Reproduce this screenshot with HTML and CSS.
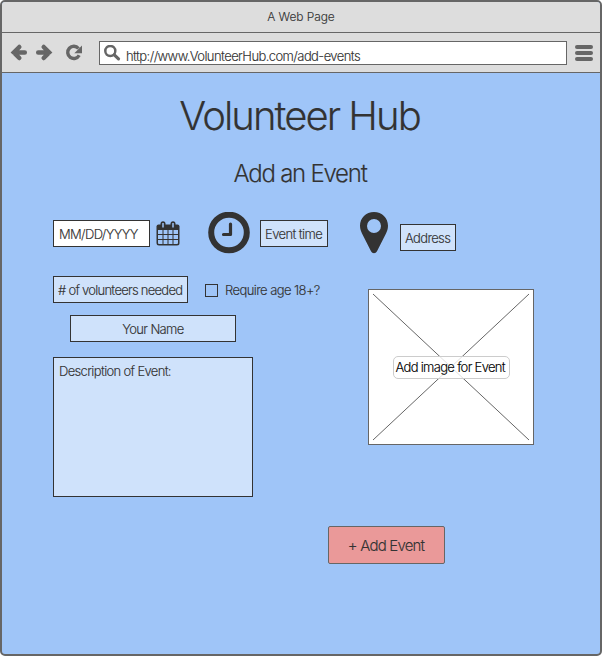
FILE: index.html
```html
<!DOCTYPE html>
<html lang="en">
<head>
<meta charset="utf-8">
<title>A Web Page</title>
<link rel="stylesheet" href="styles.css">
</head>
<body>
<div class="window">
  <header class="titlebar">A Web Page</header>
  <nav class="toolbar">
    <svg class="nav-icons" width="82" height="38" viewBox="0 0 82 38" fill="none" stroke="#666" stroke-width="4.500">
      <path d="M15.800 19.500H5M10.300 14L4.800 19.500L10.300 25" stroke-linecap="round"/>
      <path d="M29.200 19.500H40M34.700 14L40.200 19.500L34.700 25" stroke-linecap="round"/>
      <path d="M69.500 15.500A6.100 6.100 0 1 0 70.200 22.300" stroke-width="3.400"/>
      <path d="M73 12.500V20.200H65.300Z" fill="#666" stroke="none"/>
    </svg>
    <div class="address-bar">
      <svg class="search" width="17" height="17" viewBox="0 0 17 17" fill="none" stroke="#666"><circle cx="6.300" cy="6" r="5" stroke-width="2.500"/><path d="M10.300 9.800L14.500 13.800" stroke-width="3.200" stroke-linecap="round"/></svg>
      <span class="url">http://www.VolunteerHub.com/add-events</span>
    </div>
    <div class="menu"><i></i><i></i><i></i></div>
  </nav>
  <main class="page">
    <h1>Volunteer Hub</h1>
    <h2>Add an Event</h2>
    <div class="details">
      <div class="field date">MM/DD/YYYY</div>
      <svg class="calendar" width="24" height="25" viewBox="0 0 24 25"><path d="M2.500 3.500H21.500Q23.500 3.500 23.500 5.500V22Q23.500 24.500 21 24.500H3Q0.500 24.500 0.500 22V5.500Q0.500 3.500 2.500 3.500Z" fill="#333"/><path d="M2 9H6.500V13H2ZM7.500 9H11.500V13H7.500ZM12.500 9H16.500V13H12.500ZM17.500 9H22V13H17.500ZM2 14H6.500V18H2ZM7.500 14H11.500V18H7.500ZM12.500 14H16.500V18H12.500ZM17.500 14H22V18H17.500ZM2 19H6.500V23H3Q2 23 2 22ZM7.500 19H11.500V23H7.500ZM12.500 19H16.500V23H12.500ZM17.500 19H22V22Q22 23 21 23H17.500Z" fill="#9fc5f8"/><rect x="4.500" y="0.300" width="5" height="7.500" rx="2.500" fill="#333"/><rect x="14.500" y="0.300" width="5" height="7.500" rx="2.500" fill="#333"/><path d="M7 2V6.500M17 2V6.500" stroke="#9fc5f8" stroke-width="1.500"/></svg>
      <svg class="clock" width="42" height="42" viewBox="0 0 42 42" fill="none" stroke="#333"><circle cx="21" cy="20.500" r="17.800" stroke-width="6"/><path d="M22.500 12V22.500H15.500" stroke-width="3.200" stroke-linecap="round" stroke-linejoin="round"/></svg>
      <div class="field time">Event time</div>
      <svg class="pin" width="28" height="42" viewBox="0 0 28 42"><path fill="#333" fill-rule="evenodd" d="M14 0C6 0 0 6 0 13.800C0 17 1 19.500 2 21.500L11 39.200C12.300 41.800 15.700 41.800 17 39.200L26 21.500C27 19.500 28 17 28 13.800C28 6 22 0 14 0ZM14 7A7 7 0 1 1 14 21A7 7 0 1 1 14 7Z"/></svg>
      <div class="field address">Address</div>
    </div>
    <div class="body">
      <div class="form">
        <div class="requirements">
          <div class="field volunteers"># of volunteers needed</div>
          <span class="checkbox"></span>
          <span class="age">Require age 18+?</span>
        </div>
        <div class="field name">Your Name</div>
        <div class="field description">Description of Event:</div>
      </div>
      <div class="image">
        <svg class="cross" width="164" height="154" viewBox="0 0 164 154" stroke="#666" stroke-width="1"><path d="M4 4L160 150M160 4L4 150"/></svg>
        <span class="caption">Add image for Event</span>
      </div>
    </div>
    <div class="button">+ Add Event</div>
  </main>
</div>
</body>
</html>
```
FILE: styles.css
```css
* { box-sizing: border-box; }
body { margin: 0; background: #fff; }
.window { height: 656px; overflow: hidden; border: 2px solid #666; border-radius: 5px; background: #9fc5f8; color: #333; font: 300 13px/16px Inter, sans-serif; letter-spacing: -.65px; white-space: nowrap; -webkit-text-stroke: .12px; }
.titlebar { height: 31px; padding-top: 7px; border-bottom: 1px solid #666; background: #ddd; text-align: center; font-size: 12px; letter-spacing: -.1px; }
.toolbar { display: flex; height: 40px; border-bottom: 1px solid #666; background: #ddd; padding-left: 7px; }
.address-bar { display: flex; width: 468px; height: 24px; margin: 8px 0 0 8px; border: 1px solid #666; background: #fff; }
.search { margin: 3px 0 0 4px; }
.url { margin: 6px 0 0 5px; letter-spacing: -.58px; }
.menu { display: grid; align-content: start; gap: 2px; margin: 12px 0 0 8px; }
.menu i { width: 18px; height: 4px; border-radius: 2px; background: #666; }
.page { text-align: center; }
h1 { margin: 0; padding-top: 19px; font: 300 40px/48px Inter, sans-serif; letter-spacing: -1.95px; padding-right: 3px; }
h2 { margin: 19px 0 0; font: 300 24px/30px Inter, sans-serif; letter-spacing: -1.25px; padding-right: 2px; }
.details { display: flex; height: 42px; margin: 23px 0 0 51px; }
.field { height: 27px; padding: 5px 4px; border: 1px solid #333; background: #cfe2fb; text-align: left; }
.date { width: 97px; margin-top: 8px; background: #fff; padding-left: 5px; }
.calendar { margin: 9px 0 0 6px; }
.clock { margin-left: 28px; }
.time { width: 68px; margin: 8px 0 0 10px; letter-spacing: -.6px; }
.pin { margin-left: 32px; }
.address { width: 56px; margin: 12px 0 0 12px; }
.body { display: flex; margin: 22px 0 0 51px; }
.form { width: 315px; }
.requirements { display: flex; }
.volunteers { width: 135px; letter-spacing: -.74px; }
.checkbox { width: 13px; height: 13px; margin: 8px 0 0 17px; border: 1px solid #333; }
.age { margin: 6px 0 0 7px; letter-spacing: -.58px; }
.name { width: 166px; margin: 12px 0 0 17px; text-align: center; }
.description { width: 200px; height: 140px; margin-top: 15px; padding-left: 5px; letter-spacing: -.66px; }
.image { display: grid; place-items: center; width: 166px; height: 156px; margin-top: 13px; border: 1px solid #666; background: #fff; }
.image > * { grid-area: 1 / 1; }
.caption { width: 117px; height: 23px; padding: 2px 2px 0; border: 1px solid #ccc; border-radius: 5px; background: rgba(255,255,255,.8); color: #000; text-align: left; letter-spacing: -.69px; }
.button { width: 117px; height: 38px; margin: 29px 0 0 326px; padding-top: 11px; padding-right: 1px; border: 1px solid #666; border-radius: 2px; background: #ea9999; font-size: 15px; letter-spacing: -.8px; }
```
